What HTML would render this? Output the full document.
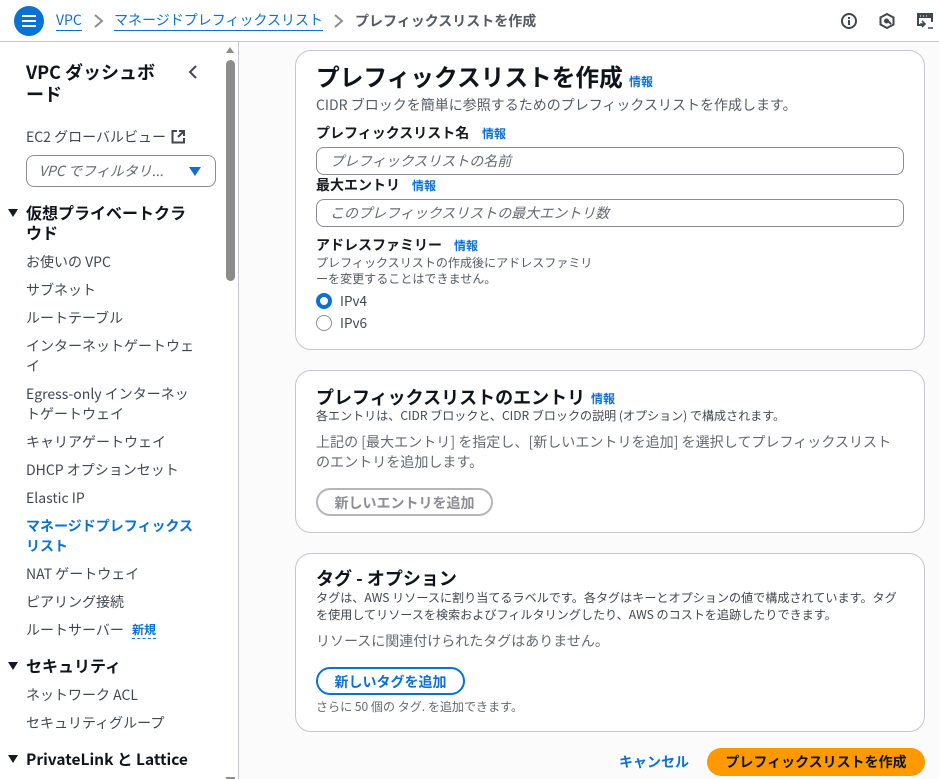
<!DOCTYPE html>
<html lang="ja"><head><meta charset="utf-8"><style>
*{box-sizing:border-box}
html,body{margin:0;padding:0}
body{width:939px;height:779px;overflow:hidden;position:relative;background:#fff;font-family:"Noto Sans CJK JP","Liberation Sans",sans-serif;color:#16191f}
.t{position:absolute;white-space:nowrap;line-height:20px;font-size:14px}
.b{font-weight:700}
.g{color:#545b64}
.l{color:#0972d3}
.nav{color:#414750;font-size:14px}
.sec{font-weight:700;font-size:16px;color:#0f141a}
.card{position:absolute;left:295px;width:630px;background:#fff;border:1px solid #c6c6cd;border-radius:16px}
.info{color:#0972d3;font-size:12px;font-weight:700}
.in{position:absolute;left:316px;width:588px;height:28px;border:1px solid #8c8c94;border-radius:8px;background:#fff;padding-left:13px;font-style:italic;color:#656871;font-size:14px;line-height:26px}
.btn{position:absolute;border-radius:14px;font-weight:700;font-size:14px;text-align:center;line-height:26px;height:28px}
.tri{position:absolute;left:8px;width:0;height:0;border-left:5.5px solid transparent;border-right:5.5px solid transparent;border-top:8px solid #16191f}
svg{position:absolute}
</style></head><body>
<div style="position:absolute;left:0;right:0;top:0;height:42px;background:#fff;border-bottom:1px solid #c6c6cd"></div>
<div style="position:absolute;left:0;top:42px;width:239px;height:737px;background:#fff;border-right:1px solid #c6c6cd"></div>
<div style="position:absolute;left:239px;top:42px;width:700px;height:737px;background:#fbfbfb"></div>

<div style="position:absolute;left:14px;top:6px;width:30px;height:30px;border-radius:50%;background:#0972d3"></div>
<div style="position:absolute;left:22px;top:15px;width:14px;height:2px;background:#fff"></div>
<div style="position:absolute;left:22px;top:20px;width:14px;height:2px;background:#fff"></div>
<div style="position:absolute;left:22px;top:25px;width:14px;height:2px;background:#fff"></div>

<div class="t l" style="left:56px;top:11px;border-bottom:1px solid #0972d3;height:20px;line-height:19px">VPC</div>
<svg style="left:93px;top:14px" width="12" height="14"><path d="M2 1l7 6-7 6" fill="none" stroke="#8c8c94" stroke-width="2"/></svg>
<div class="t l" style="left:114px;top:11px;border-bottom:1px solid #0972d3;height:20px;line-height:19px">マネージドプレフィックスリスト</div>
<svg style="left:333px;top:14px" width="12" height="14"><path d="M2 1l7 6-7 6" fill="none" stroke="#8c8c94" stroke-width="2"/></svg>
<div class="t b g" style="left:355px;top:11px;font-size:14px">プレフィックスリストを作成</div>

<svg style="left:840px;top:12px" width="18" height="18"><circle cx="9" cy="9" r="7" fill="none" stroke="#424650" stroke-width="2"/><path d="M9 8v5M9 5v2" stroke="#424650" stroke-width="2"/></svg>
<svg style="left:878px;top:12px" width="18" height="18"><path d="M9 2l6.5 3.5v7L9 16l-6.500-3.500v-7z" fill="none" stroke="#424650" stroke-width="2"/><circle cx="8.500" cy="9" r="2.500" fill="#424650"/><path d="M10 9l3 3" stroke="#424650" stroke-width="2"/></svg>
<svg style="left:916px;top:12px" width="18" height="18"><path d="M7 13H2V2h14v8" fill="none" stroke="#424650" stroke-width="2"/><path d="M2 2h14v4H2z" fill="#424650"/><path d="M4 4h1M7 4h1M10 4h1" stroke="#fff"/><path d="M6 9l3 3-3 3M4 12h5M12 16h5" fill="none" stroke="#424650" stroke-width="1.600"/></svg>

<div style="position:absolute;left:226px;top:60px;width:9px;height:221px;border-radius:5px;background:#8c8c8c"></div>
<div style="position:absolute;left:226px;top:47px;width:0;height:0;border-left:4.500px solid transparent;border-right:4.500px solid transparent;border-bottom:6px solid #8c8c8c"></div>
<div style="position:absolute;left:226px;top:777px;width:9px;height:2px;background:#8c8c8c"></div>

<div class="t sec" style="left:26px;top:61px;line-height:22px;font-size:18px">VPC ダッシュボ<br>ード</div>
<svg style="left:187px;top:64px" width="12" height="16"><path d="M9 2L3 8l6 6" fill="none" stroke="#424650" stroke-width="2"/></svg>
<div class="t nav" style="left:26px;top:127px">EC2 グローバルビュー</div>
<svg style="left:171px;top:129px" width="15" height="15"><path d="M6 2H1.500v11.500H13V9" fill="none" stroke="#424650" stroke-width="2"/><path d="M8 2h5v5M13 2L7 8" fill="none" stroke="#424650" stroke-width="2"/></svg>
<div style="position:absolute;left:26px;top:155px;width:190px;height:32px;border:1px solid #8c8c94;border-radius:8px;padding-left:12px;font-style:italic;color:#656871;font-size:14px;line-height:30px">VPC でフィルタリ...</div>
<div style="position:absolute;left:189px;top:167px;width:0;height:0;border-left:6px solid transparent;border-right:6px solid transparent;border-top:9px solid #0972d3"></div>

<div class="tri" style="top:209px"></div>
<div class="t sec" style="left:26px;top:202px;font-size:16px">仮想プライベートクラ<br>ウド</div>
<div class="t nav" style="left:26px;top:252px">お使いの VPC</div>
<div class="t nav" style="left:26px;top:280px">サブネット</div>
<div class="t nav" style="left:26px;top:308px">ルートテーブル</div>
<div class="t nav" style="left:26px;top:336px">インターネットゲートウェ<br>イ</div>
<div class="t nav" style="left:26px;top:384px">Egress-only インターネッ<br>トゲートウェイ</div>
<div class="t nav" style="left:26px;top:432px">キャリアゲートウェイ</div>
<div class="t nav" style="left:26px;top:460px">DHCP オプションセット</div>
<div class="t nav" style="left:26px;top:488px">Elastic IP</div>
<div class="t b l" style="left:26px;top:516px">マネージドプレフィックス<br>リスト</div>
<div class="t nav" style="left:26px;top:564px">NAT ゲートウェイ</div>
<div class="t nav" style="left:26px;top:592px">ピアリング接続</div>
<div class="t nav" style="left:26px;top:620px">ルートサーバー</div>
<div class="t info" style="left:132px;top:620px;border-bottom:1px dashed #0972d3;height:19px">新規</div>
<div class="tri" style="top:662px"></div>
<div class="t sec" style="left:26px;top:655px;font-size:16px">セキュリティ</div>
<div class="t nav" style="left:26px;top:685px">ネットワーク ACL</div>
<div class="t nav" style="left:26px;top:713px">セキュリティグループ</div>
<div class="tri" style="top:755px"></div>
<div class="t sec" style="left:26px;top:749px;font-size:15.500px">PrivateLink と Lattice</div>

<div class="card" style="top:50px;height:300px"></div>
<div class="t b" style="left:316px;top:61px;font-size:23.700px;line-height:30px;color:#0f141a">プレフィックスリストを作成</div>
<div class="t info" style="left:629px;top:72px">情報</div>
<div class="t g" style="left:316px;top:95px;font-size:14px">CIDR ブロックを簡単に参照するためのプレフィックスリストを作成します。</div>
<div class="t b" style="left:316px;top:123px;font-size:14px">プレフィックスリスト名</div>
<div class="t info" style="left:482px;top:124px">情報</div>
<div class="in" style="top:147px">プレフィックスリストの名前</div>
<div class="t b" style="left:316px;top:175px;font-size:14px">最大エントリ</div>
<div class="t info" style="left:412px;top:176px">情報</div>
<div class="in" style="top:199px">このプレフィックスリストの最大エントリ数</div>
<div class="t b" style="left:316px;top:235px;font-size:14px">アドレスファミリー</div>
<div class="t info" style="left:454px;top:236px">情報</div>
<div class="t g" style="left:316px;top:255px;font-size:12.050px;line-height:16px">プレフィックスリストの作成後にアドレスファミリ<br>ーを変更することはできません。</div>
<div style="position:absolute;left:316px;top:293px;width:16px;height:16px;border-radius:50%;border:4.500px solid #0972d3;background:#fff"></div>
<div class="t" style="left:340px;top:290px;font-size:13.500px;color:#414750">IPv4</div>
<div style="position:absolute;left:316px;top:315px;width:16px;height:16px;border-radius:50%;border:1px solid #8c8c94;background:#fff"></div>
<div class="t" style="left:340px;top:312px;font-size:13.500px;color:#414750">IPv6</div>

<div class="card" style="top:370px;height:163px"></div>
<div class="t b" style="left:316px;top:385px;font-size:18px;line-height:24px;color:#0f141a">プレフィックスリストのエントリ</div>
<div class="t info" style="left:591px;top:389px">情報</div>
<div class="t" style="left:316px;top:406px;font-size:12.050px;color:#414750">各エントリは、CIDR ブロックと、CIDR ブロックの説明 (オプション) で構成されます。</div>
<div class="t g" style="left:316px;top:432px;font-size:14.050px;line-height:20px;color:#656871">上記の [最大エントリ] を指定し、[新しいエントリを追加] を選択してプレフィックスリスト<br>のエントリを追加します。</div>
<div class="btn" style="left:316px;top:488px;width:177px;border:2px solid #b4b4bb;color:#8c8c94">新しいエントリを追加</div>

<div class="card" style="top:553px;height:179px"></div>
<div class="t b" style="left:316px;top:566px;font-size:18px;line-height:24px;color:#0f141a">タグ - オプション</div>
<div class="t" style="left:316px;top:589px;font-size:12.100px;line-height:17px;color:#414750">タグは、AWS リソースに割り当てるラベルです。各タグはキーとオプションの値で構成されています。タグ<br>を使用してリソースを検索およびフィルタリングしたり、AWS のコストを追跡したりできます。</div>
<div class="t" style="left:316px;top:631px;font-size:14px;color:#656871">リソースに関連付けられたタグはありません。</div>
<div class="btn" style="left:316px;top:667px;width:149px;border:2px solid #0972d3;color:#0972d3">新しいタグを追加</div>
<div class="t g" style="left:316px;top:697px;font-size:12.050px;color:#656871">さらに 50 個の タグ. を追加できます。</div>

<div class="t b l" style="left:619px;top:752px;font-size:14px">キャンセル</div>
<div class="btn" style="left:707px;top:748px;width:218px;background:#ff9900;color:#0f141a;line-height:28px">プレフィックスリストを作成</div>
</body></html>
